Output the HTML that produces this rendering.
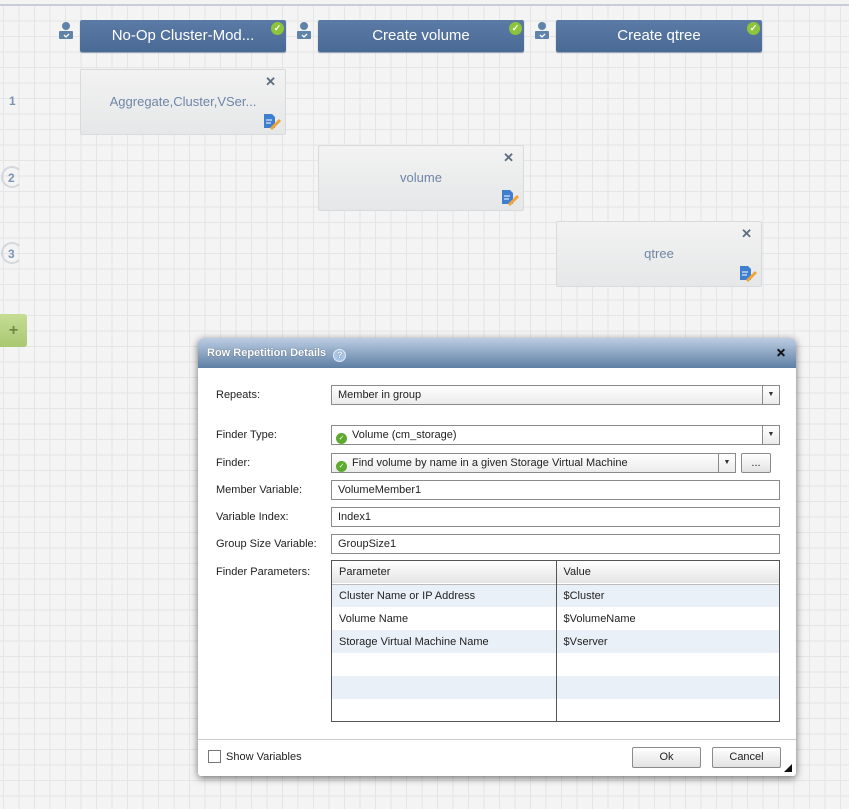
<!DOCTYPE html>
<html><head><meta charset="utf-8"><style>
*{box-sizing:border-box;margin:0;padding:0}
body{width:849px;height:809px;overflow:hidden;position:relative;font-family:"Liberation Sans",sans-serif;background-color:#f4f4f4;
background-image:linear-gradient(#e5e5e5 1px,transparent 1px),linear-gradient(90deg,#e5e5e5 1px,transparent 1px);background-size:15.5px 15.5px;background-position:3px 5px}
.a{position:absolute}
.topbar{left:0;top:0;width:849px;height:6px;background:#f4f4f4;border-bottom:2px solid #c9ced6}
.hdr{height:32px;width:206px;top:20px;background:linear-gradient(#5b7aa5,#4a6a96);border-radius:2px;color:#fff;font-size:15px;text-align:center;line-height:32px;box-shadow:0 1px 1px #8899aa}
.chk{width:13px;height:13px;border-radius:50%;background:#8cc43c;right:2px;top:2px;color:#fff;font-size:9px;line-height:13px;text-align:center;font-weight:bold}
.usr{width:16px;height:18px;top:21px}
.task{width:206px;height:66px;background:linear-gradient(#f2f2f2,#e6e7e8);border:1px solid #d9dadc;border-radius:2px;color:#6e86a8;font-size:13px;text-align:center;line-height:64px}
.task .x{position:absolute;right:9px;top:5px;line-height:14px;color:#5e6d80;font-size:13px;font-weight:bold}
.task .ed{position:absolute;right:4px;bottom:4px;width:18px;height:17px}
.num{color:#7b93b5;font-size:12px;font-weight:bold}
.circ{width:22px;height:22px;border:2px solid #d4d7db;border-radius:50%;border-right-color:transparent;border-top-color:#d4d7db}
.dlg{left:198px;top:338px;width:598px;height:438px;background:#fff;border-radius:6px 6px 3px 3px;box-shadow:0 2px 8px rgba(0,0,0,.55);overflow:hidden;font-size:11px;color:#222;font-family:"Liberation Sans",sans-serif}
.dh{left:0;top:0;width:598px;height:30px;background:linear-gradient(#bccde2,#5f7fa5);color:#fff;font-weight:bold;font-size:11px;line-height:30px;padding-left:9px;text-shadow:0 0 1px #345}
.lbl{left:18px;font-size:11px}
.inp{left:133px;height:20px;border:1px solid #8a8a8a;background:#fff;padding-left:6px;line-height:18px;font-size:11px}
.sel{background:linear-gradient(#fff,#ebebeb)}
.arr{position:absolute;right:0;top:0;width:17px;height:18px;border-left:1px solid #8a8a8a;font-size:7px;text-align:center;line-height:18px;color:#333}
.gic{display:inline-block;width:11px;height:11px;border-radius:50%;background:#5daa2e;vertical-align:-2px;margin-right:5px;margin-left:-2px;color:#fff;font-size:7px;line-height:11px;text-align:center}
table{border-collapse:collapse;font-size:11px}
td{height:23px;padding-left:7px;border-right:1px solid #555}
.btn{height:21px;border:1px solid #8a8a8a;border-radius:2px;background:linear-gradient(#fff,#e2e2e2);text-align:center;line-height:19px;font-size:11px}
</style></head><body>
<div class="a topbar"></div>

<svg class="a usr" style="left:58px" viewBox="0 0 16 18"><circle cx="8" cy="5" r="4" fill="#5f84aa"/><rect x="1" y="10" width="14" height="8" rx="1" fill="#5f84aa"/><path d="M6 14l2 2 3-3" stroke="#fff" fill="none" stroke-width="1.3"/></svg>
<svg class="a usr" style="left:296px" viewBox="0 0 16 18"><circle cx="8" cy="5" r="4" fill="#5f84aa"/><rect x="1" y="10" width="14" height="8" rx="1" fill="#5f84aa"/><path d="M6 14l2 2 3-3" stroke="#fff" fill="none" stroke-width="1.3"/></svg>
<svg class="a usr" style="left:534px" viewBox="0 0 16 18"><circle cx="8" cy="5" r="4" fill="#5f84aa"/><rect x="1" y="10" width="14" height="8" rx="1" fill="#5f84aa"/><path d="M6 14l2 2 3-3" stroke="#fff" fill="none" stroke-width="1.3"/></svg>

<div class="a hdr" style="left:80px">No-Op Cluster-Mod...<div class="a chk">✓</div></div>
<div class="a hdr" style="left:318px">Create volume<div class="a chk">✓</div></div>
<div class="a hdr" style="left:556px">Create qtree<div class="a chk">✓</div></div>

<div class="a task" style="left:80px;top:69px">Aggregate,Cluster,VSer...<span class="x">✕</span><svg class="ed" viewBox="0 0 18 17"><path d="M1 1h8l3 3v11H1z" fill="#3f7fd0"/><path d="M3 7h6M3 10h5" stroke="#fff"/><path d="M8 16l9-9" stroke="#f2a33a" stroke-width="3"/></svg></div>
<div class="a task" style="left:318px;top:145px">volume<span class="x">✕</span><svg class="ed" viewBox="0 0 18 17"><path d="M1 1h8l3 3v11H1z" fill="#3f7fd0"/><path d="M3 7h6M3 10h5" stroke="#fff"/><path d="M8 16l9-9" stroke="#f2a33a" stroke-width="3"/></svg></div>
<div class="a task" style="left:556px;top:221px">qtree<span class="x">✕</span><svg class="ed" viewBox="0 0 18 17"><path d="M1 1h8l3 3v11H1z" fill="#3f7fd0"/><path d="M3 7h6M3 10h5" stroke="#fff"/><path d="M8 16l9-9" stroke="#f2a33a" stroke-width="3"/></svg></div>

<div class="a num" style="left:9px;top:94px">1</div>
<div class="a circ" style="left:1px;top:166px"></div><div class="a num" style="left:8px;top:171px">2</div>
<div class="a circ" style="left:1px;top:242px"></div><div class="a num" style="left:8px;top:247px">3</div>
<div class="a" style="left:0;top:314px;width:27px;height:33px;background:linear-gradient(#c5dd94,#a9c872);border-radius:0 3px 3px 0;color:#6d8a43;text-align:center;line-height:33px;font-size:16px;font-weight:bold">+</div>

<div class="a dlg">
<div class="a dh">Row Repetition Details <span style="display:inline-block;width:13px;height:13px;border-radius:50%;background:#a8c4e6;border:1px solid #e3edf8;color:#fff;font-size:9px;line-height:11px;text-align:center;margin-left:4px;vertical-align:-2px">?</span><span style="position:absolute;right:10px;top:0;color:#111;font-size:12px">✕</span></div>
<div class="a lbl" style="top:51px">Repeats:</div>
<div class="a inp sel" style="top:47px;width:449px">Member in group<span class="arr">▼</span></div>
<div class="a lbl" style="top:91px">Finder Type:</div>
<div class="a inp" style="top:87px;width:449px"><span class="gic">✓</span>Volume (cm_storage)<span class="arr" style="background:linear-gradient(#fff,#ebebeb)">▼</span></div>
<div class="a lbl" style="top:119px">Finder:</div>
<div class="a inp sel" style="top:115px;width:405px"><span class="gic">✓</span>Find volume by name in a given Storage Virtual Machine<span class="arr">▼</span></div>
<div class="a btn" style="left:543px;top:115px;width:30px;height:20px">...</div>
<div class="a lbl" style="top:146px">Member Variable:</div>
<div class="a inp" style="top:142px;width:449px">VolumeMember1</div>
<div class="a lbl" style="top:173px">Variable Index:</div>
<div class="a inp" style="top:169px;width:449px">Index1</div>
<div class="a lbl" style="top:200px">Group Size Variable:</div>
<div class="a inp" style="top:196px;width:449px">GroupSize1</div>
<div class="a lbl" style="top:228px">Finder Parameters:</div>
<div class="a" style="left:133px;top:222px;width:449px;height:162px;border:1px solid #555;overflow:hidden">
<table style="width:447px">
<tr style="background:linear-gradient(#fff,#e4e4e4);border-bottom:1px solid #bbb"><td style="width:224px">Parameter</td><td style="border-right:none">Value</td></tr>
<tr style="background:#eaf0f8"><td>Cluster Name or IP Address</td><td style="border-right:none">$Cluster</td></tr>
<tr><td>Volume Name</td><td style="border-right:none">$VolumeName</td></tr>
<tr style="background:#eaf0f8"><td>Storage Virtual Machine Name</td><td style="border-right:none">$Vserver</td></tr>
<tr><td></td><td style="border-right:none"></td></tr>
<tr style="background:#eaf0f8"><td></td><td style="border-right:none"></td></tr>
<tr><td></td><td style="border-right:none"></td></tr>
</table></div>
<div class="a" style="left:0;top:401px;width:598px;height:1px;background:#ccc"></div>
<div class="a" style="left:10px;top:412px;width:13px;height:13px;border:1px solid #777;background:#fff"></div>
<div class="a" style="left:28px;top:413px">Show Variables</div>
<div class="a btn" style="left:434px;top:409px;width:69px">Ok</div>
<div class="a btn" style="left:514px;top:409px;width:69px">Cancel</div>
<div class="a" style="right:4px;bottom:4px;width:0;height:0;border-left:8px solid transparent;border-bottom:8px solid #111"></div>
</div>
</body></html>
